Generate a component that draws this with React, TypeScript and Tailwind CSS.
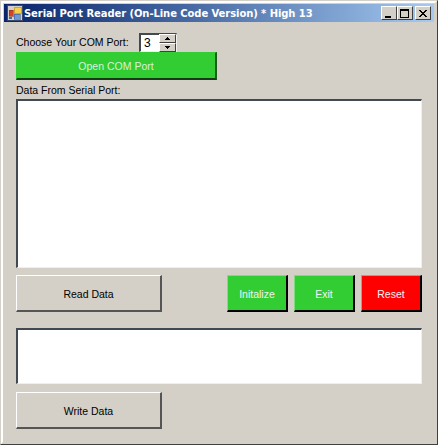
const sans = "font-['Liberation_Sans',Arial,sans-serif]";

function AppIcon() {
  return (
    <svg width="16" height="16" viewBox="0 0 16 16" className="shrink-0" shapeRendering="crispEdges">
      <rect x="0.5" y="0.5" width="15" height="15" fill="#d4d0c8" stroke="#3b4a6b" />
      <rect x="2" y="5" width="4" height="6" fill="#d8402a" stroke="#7a2a20" strokeWidth="0.5" />
      <rect x="7" y="2" width="7" height="6" fill="#f5d24a" stroke="#9c7a1c" strokeWidth="0.5" />
      <rect x="7" y="9" width="6" height="5" fill="#6d9ad6" stroke="#2f4f8a" strokeWidth="0.5" />
      <rect x="2" y="12" width="3" height="2" fill="#3a6ea5" />
    </svg>
  );
}

function CaptionButton({ kind }: { kind: "min" | "max" | "close" }) {
  return (
    <div className="flex h-[14px] w-[16px] items-center justify-center border border-t-white border-l-white border-r-[#404040] border-b-[#404040] bg-[#d4d0c8]">
      <svg width="10" height="9" viewBox="0 0 10 9" shapeRendering="crispEdges">
        {kind === "min" && <rect x="1" y="7" width="6" height="2" fill="#000" />}
        {kind === "max" && (
          <path d="M0 0h9v9H0zM1 2v6h7V2z" fillRule="evenodd" fill="#000" />
        )}
        {kind === "close" && (
          <path d="M1 1l7 7M2 1l7 7M8 1l-7 7M9 1l-7 7" stroke="#000" fill="none" shapeRendering="auto" />
        )}
      </svg>
    </div>
  );
}

function GrayButton({ label }: { label: string }) {
  return (
    <button className="flex h-[37px] w-[146px] items-center justify-center border-t border-l border-r-2 border-b-2 border-t-white border-l-white border-r-[#555] border-b-[#555] bg-[#d4d0c8] pt-[3px] text-[10.5px] text-black">
      {label}
    </button>
  );
}

function ColorButton({ label, className }: { label: string; className: string }) {
  return (
    <button
      className={`flex h-[37px] w-[61px] items-center justify-center border-t border-l border-r-2 border-b-2 border-r-black border-b-black pt-[3px] text-[10.5px] text-[#f4f4f4] ${className}`}
    >
      {label}
    </button>
  );
}

function SunkenBox({ className }: { className: string }) {
  return (
    <div
      className={`w-[406px] border-t-2 border-l-2 border-r border-b border-t-[#404a50] border-l-[#404a50] border-r-[#f0efeb] border-b-[#f0efeb] bg-white ${className}`}
    />
  );
}

function SpinArrow({ up }: { up: boolean }) {
  return (
    <div className="flex h-[9px] w-[17px] items-center justify-center border border-t-white border-l-white border-r-[#404040] border-b-[#404040] bg-[#d4d0c8]">
      <svg width="5" height="3" viewBox="0 0 5 3" shapeRendering="crispEdges">
        <path d={up ? "M2 0h1v1h1v1h1v1H0V2h1V1h1z" : "M0 0h5v1H4v1H3v1H2V2H1V1H0z"} fill="#000" />
      </svg>
    </div>
  );
}

export default function App() {
  return (
    <div
      className={`${sans} h-[445px] w-[438px] overflow-hidden border border-t-[#d4d0c8] border-l-[#d4d0c8] border-r-[#404040] border-b-[#404040] bg-[#d4d0c8]`}
    >
      <div className="h-full border-2 border-t-white border-l-white border-r-[#d4d0c8] border-b-[#d4d0c8] p-px">
        {/* title bar */}
        <div className="flex h-[18px] items-center bg-gradient-to-r from-[#0a246a] to-[#a6caf0] pl-[3px] pr-[3px]">
          <AppIcon />
          <span className="ml-px whitespace-nowrap font-['DejaVu_Sans',sans-serif] text-[10px] font-bold tracking-[-0.08px] text-white">
            Serial Port Reader (On-Line Code Version) * High 13
          </span>
          <div className="ml-auto flex">
            <CaptionButton kind="min" />
            <CaptionButton kind="max" />
            <div className="ml-[2px]">
              <CaptionButton kind="close" />
            </div>
          </div>
        </div>

        {/* form body */}
        <div className="flex flex-col items-start pl-3">
          <div className="mt-[11px] flex h-[19px] items-center">
            <span className="w-[123px] text-[10.5px] leading-none text-black">Choose Your COM Port:</span>
            <div className="flex h-[19px] w-[38px] items-center border-t-2 border-l-2 border-r border-b border-t-[#404a50] border-l-[#404a50] border-r-[#f0f0f0] border-b-[#f0f0f0] bg-white">
              <span className="ml-[3px] flex-1 text-[12px] leading-none text-black">3</span>
              <div className="flex flex-col">
                <SpinArrow up />
                <SpinArrow up={false} />
              </div>
            </div>
          </div>

          <button className="flex h-[28px] w-[201px] items-center justify-center border-t border-l border-r-2 border-b-2 border-t-[#32cd32] border-l-[#32cd32] border-r-[#1c5c1c] border-b-[#143c14] bg-[#32cd32] pt-[2px] text-[10.5px] text-[#d8f2d8]">
            Open COM Port
          </button>

          <span className="mt-[3px] h-[16px] text-[10.5px] leading-[15px] text-black">Data From Serial Port:</span>

          <SunkenBox className="h-[169px]" />

          <div className="mt-[7px] flex w-[406px] items-start">
            <GrayButton label="Read Data" />
            <div className="ml-auto flex gap-[6px]">
              <ColorButton label="Initalize" className="border-t-[#7fdc7f] border-l-[#7fdc7f] bg-[#32cd32]" />
              <ColorButton label="Exit" className="border-t-[#7fdc7f] border-l-[#7fdc7f] bg-[#32cd32]" />
              <ColorButton label="Reset" className="border-t-[#f08080] border-l-[#f08080] bg-[#ff0000]" />
            </div>
          </div>

          <SunkenBox className="mt-[16px] h-[56px]" />

          <div className="mt-[8px]">
            <GrayButton label="Write Data" />
          </div>
        </div>
      </div>
    </div>
  );
}
